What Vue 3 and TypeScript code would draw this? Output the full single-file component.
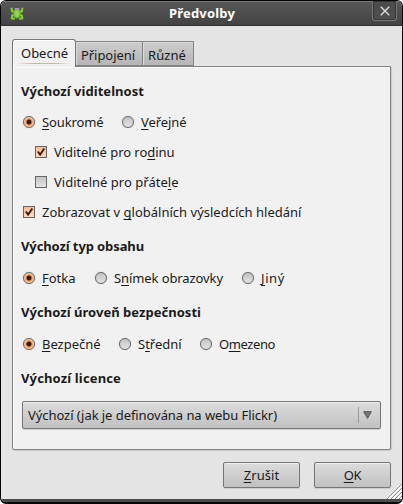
<script setup lang="ts">
import { ref } from 'vue'

interface Option {
  before: string
  key: string
  after: string
  width: number
  cell: number
}

interface Check {
  before: string
  key: string
  after: string
  width: number
  nested: boolean
  on: boolean
}

// Spreads a label over a given width by adjusting its letter spacing.
const vFit = (el: HTMLElement, binding: { value: number }) => {
  el.style.letterSpacing = '0px'
  const natural = el.getBoundingClientRect().width
  const count = (el.textContent ?? '').length
  if (count > 0) el.style.letterSpacing = `${(binding.value - natural) / count}px`
}

const tabs = [
  { label: 'Obecné', width: 47 },
  { label: 'Připojení', width: 54 },
  { label: 'Různé', width: 38 },
]
const activeTab = ref(0)

const visibility: Option[] = [
  { before: '', key: 'S', after: 'oukromé', width: 61.5, cell: 99 },
  { before: '', key: 'V', after: 'eřejné', width: 45.5, cell: 80 },
]
const content: Option[] = [
  { before: '', key: 'F', after: 'otka', width: 33.5, cell: 72 },
  { before: 'S', key: 'n', after: 'ímek obrazovky', width: 109, cell: 147 },
  { before: '', key: 'J', after: 'iný', width: 24, cell: 60 },
]
const safety: Option[] = [
  { before: '', key: 'B', after: 'ezpečné', width: 58.5, cell: 96 },
  { before: 'S', key: 't', after: 'řední', width: 43.5, cell: 81 },
  { before: 'O', key: 'm', after: 'ezeno', width: 56, cell: 80 },
]
const visibilityPick = ref(0)
const contentPick = ref(0)
const safetyPick = ref(0)

const checks = ref<Check[]>([
  { before: 'Viditelné pro ro', key: 'd', after: 'inu', width: 120.5, nested: true, on: true },
  { before: 'Viditelné pro přáte', key: 'l', after: 'e', width: 124.5, nested: true, on: false },
  { before: 'Zobrazovat v ', key: 'g', after: 'lobálních výsledcích hledání', width: 259.5, nested: false, on: true },
])
</script>

<template>
  <div class="window">
    <header class="titlebar">
      <svg class="frog" viewBox="0 0 14 13">
        <g fill="none" stroke="#7dcb2c" stroke-width="2.2" stroke-linecap="round" stroke-linejoin="round">
          <path d="M4.5 5 2.2 4.4 1.6 1.6M9.5 5l2.3-.6.6-2.8M4.5 7.8 2.2 8.6l-.5 2.8 2.3.2M9.5 7.8l2.3.8.5 2.8-2.3.2" />
        </g>
        <ellipse cx="7" cy="6.5" rx="3.6" ry="5" fill="#74bd2e" />
        <ellipse cx="7" cy="6.8" rx="1.9" ry="3.2" fill="#91d65d" />
        <path d="M4.7.9h4.6v1.8H4.7z" fill="#a79aad" />
      </svg>
      <h1><span v-fit="66">Předvolby</span></h1>
      <button class="close" aria-label="Zavřít">
        <svg viewBox="0 0 10 10"><path d="M.8.8l8.4 8.4M9.2.8.8 9.2" /></svg>
      </button>
    </header>

    <main class="body">
      <nav class="tabs">
        <button
          v-for="(tab, i) in tabs"
          :key="tab.label"
          class="tab"
          :class="[{ active: activeTab === i }, `tab-${i}`]"
          @click="activeTab = i"
        >
          <span v-fit="tab.width">{{ tab.label }}</span>
        </button>
      </nav>

      <section class="panel">
        <h2><span v-fit="123">Výchozí viditelnost</span></h2>
        <div class="row">
          <label v-for="(o, i) in visibility" :key="i" class="option" :style="{ width: o.cell + 'px' }" @click="visibilityPick = i">
            <i class="radio" :class="{ on: visibilityPick === i }" />
            <span v-fit="o.width">{{ o.before }}<u>{{ o.key }}</u>{{ o.after }}</span>
          </label>
        </div>
        <label v-for="(c, i) in checks" :key="i" class="row" :class="{ nested: c.nested }" @click="c.on = !c.on">
          <i class="check" :class="{ on: c.on }">
            <svg v-if="c.on" viewBox="0 0 12 12"><path d="M2.8 5.5 5.1 8.6 9.3 2.5" /></svg>
          </i>
          <span v-fit="c.width">{{ c.before }}<u>{{ c.key }}</u>{{ c.after }}</span>
        </label>

        <h2 class="spaced"><span v-fit="123">Výchozí typ obsahu</span></h2>
        <div class="row">
          <label v-for="(o, i) in content" :key="i" class="option" :style="{ width: o.cell + 'px' }" @click="contentPick = i">
            <i class="radio" :class="{ on: contentPick === i }" />
            <span v-fit="o.width">{{ o.before }}<u>{{ o.key }}</u>{{ o.after }}</span>
          </label>
        </div>

        <h2 class="spaced"><span v-fit="180">Výchozí úroveň bezpečnosti</span></h2>
        <div class="row">
          <label v-for="(o, i) in safety" :key="i" class="option" :style="{ width: o.cell + 'px' }" @click="safetyPick = i">
            <i class="radio" :class="{ on: safetyPick === i }" />
            <span v-fit="o.width">{{ o.before }}<u>{{ o.key }}</u>{{ o.after }}</span>
          </label>
        </div>

        <h2 class="spaced"><span v-fit="100">Výchozí licence</span></h2>
        <button class="select">
          <span v-fit="249">Výchozí (jak je definována na webu Flickr)</span>
          <svg viewBox="0 0 9 8"><path d="M.7.7h7.6L4.5 7.3z" /></svg>
        </button>
      </section>

      <footer class="actions">
        <button class="action"><span v-fit="35.5"><u>Z</u>rušit</span></button>
        <button class="action"><span v-fit="17.5"><u>O</u>K</span></button>
      </footer>
    </main>
    <div class="frame" />
    <svg class="grip" viewBox="0 0 15 15">
      <path d="M1 15 15 1M5 15 15 5M9 15l6-6M13 15l2-2" stroke="#fff" stroke-width="1.6" />
      <path d="M0 15 15 0M4 15 15 4M8 15l7-7M12 15l3-3" stroke="#8e8e8e" />
    </svg>
  </div>
</template>

<style>
body {
  background: #fff;
}
</style>

<style scoped>
.window {
  box-sizing: border-box;
  position: relative;
  display: flex;
  flex-direction: column;
  width: 403px;
  height: 504px;
  overflow: hidden;
  border: 1px solid #050505;
  border-bottom-width: 2px;
  border-radius: 6px;
  background: #e4e4e4;
  color: #1b1b1b;
  font: 13px/20px "Noto Sans", sans-serif;
}
span {
  display: inline-block;
  white-space: pre;
}
u {
  text-decoration: underline;
  text-decoration-thickness: 1px;
  text-underline-offset: 2px;
  text-decoration-skip-ink: none;
}
button {
  padding: 0;
  font: inherit;
  color: inherit;
}
.titlebar {
  box-sizing: border-box;
  display: flex;
  flex: none;
  align-items: flex-start;
  height: 25px;
  border-top: 1px solid #777;
  border-bottom: 1px solid #303030;
  background: linear-gradient(#575757, #434343);
}
.frog {
  width: 14px;
  height: 13px;
  margin: 5px 0 0 9px;
}
h1 {
  flex: 1;
  margin: 1px 0 0 145px;
  color: #fff;
  font-size: 13px;
  line-height: 20px;
}
.close {
  box-sizing: border-box;
  display: grid;
  place-items: center;
  width: 25px;
  height: 20px;
  margin: -1px 5px 0 0;
  border: 1px solid #777;
  border-top: 0;
  border-radius: 0 0 3px 3px;
  background: #4d4d4d;
  box-shadow: inset 0 0 0 1px #353535;
}
.close svg {
  width: 10px;
  height: 10px;
}
.close path {
  fill: none;
  stroke: #d6d6d6;
  stroke-width: 1.5;
}
.body {
  flex: 1;
  padding: 13px 11px 0;
}
.tabs {
  display: flex;
  align-items: flex-end;
  height: 27px;
}
.tab {
  box-sizing: border-box;
  height: 25px;
  border: 1px solid #858585;
  border-left: 0;
  background: linear-gradient(#cdcdcd, #b5b5b5);
  box-shadow: inset 1px 1px #d9d9d9;
  text-align: left;
}
.tab span {
  margin: 2px 0 0 5px;
}
.tab-0 { width: 64px; }
.tab-1 { width: 67px; }
.tab-2 { width: 51px; }
.tab.active {
  position: relative;
  height: 28px;
  margin-bottom: -1px;
  border: 1px solid #777;
  border-bottom: 0;
  border-radius: 3px 3px 0 0;
  background: #f1f1f1;
  box-shadow: inset 1px 1px #fff;
}
.tab.active span {
  margin: 0 0 2px 8px;
}
.tab.active::after {
  content: "";
  position: absolute;
  right: 4px;
  bottom: 3px;
  left: 4px;
  height: 1px;
  background: linear-gradient(90deg, #f1f1f1, #efa58b 30%, #efa58b 70%, #f1f1f1);
}
.panel {
  box-sizing: border-box;
  height: 384px;
  padding: 8px 9px 0;
  border: 1px solid #858585;
  border-radius: 0 0 2px 2px;
  background: #f1f1f1;
  box-shadow: 1px 1px 1px #c8c8c8, inset 1px 1px #fafafa;
}
h2 {
  height: 32px;
  margin: 0 0 0 -1px;
  font-size: 13px;
  line-height: 32px;
}
h2.spaced {
  margin: 3px 0 1px -1px;
}
.row {
  display: flex;
  align-items: center;
  height: 30px;
  padding-left: 1px;
}
.nested {
  padding-left: 13px;
}
.option {
  display: flex;
  align-items: center;
}
.radio,
.check {
  box-sizing: border-box;
  flex: none;
  width: 12px;
  height: 12px;
  margin-right: 7px;
  border: 1px solid #666;
  background: linear-gradient(#c4c4c4, #e3e3e3);
}
.radio {
  margin-top: -1px;
  border-radius: 50%;
  box-shadow: 0 0 1px #999;
}
.radio.on {
  background: radial-gradient(circle, #3b1b0d 0 2px, #ee9c62 3px, #ffd1a6 5px);
}
.check {
  margin-top: -1px;
}
.check.on {
  background: linear-gradient(#f9bd93, #ffd8bb);
}
.check svg {
  display: block;
  width: 12px;
  height: 12px;
  margin: -1px;
}
.check path {
  fill: none;
  stroke: #351b12;
  stroke-width: 1.8;
}
.select {
  box-sizing: border-box;
  display: flex;
  align-items: center;
  width: 359px;
  height: 28px;
  margin-top: 7px;
  padding: 0 8px 0 5px;
  border: 1px solid #777;
  border-radius: 2px;
  background: linear-gradient(#dcdcdc, #c1c1c1);
  box-shadow: inset 0 1px #eee, 0 1px 1px #ccc;
}
.select::after {
  content: "";
  order: 1;
  width: 1px;
  height: 16px;
  margin: 0 4px 0 auto;
  background: #999;
}
.select svg {
  order: 2;
  width: 9px;
  height: 8px;
}
.select path {
  fill: #777;
  stroke: #555;
}
.actions {
  display: flex;
  justify-content: flex-end;
  gap: 14px;
  padding-top: 12px;
}
.action {
  box-sizing: border-box;
  width: 77px;
  height: 26px;
  border: 1px solid #777;
  border-radius: 2px;
  background: linear-gradient(#dcdcdc, #c1c1c1);
  box-shadow: inset 0 1px #eee, 0 1px 1px #ccc;
}
.frame {
  flex: none;
  height: 3px;
  background: #4b4b4b;
}
.grip {
  position: absolute;
  right: 0;
  bottom: 3px;
  width: 15px;
  height: 15px;
}
</style>
